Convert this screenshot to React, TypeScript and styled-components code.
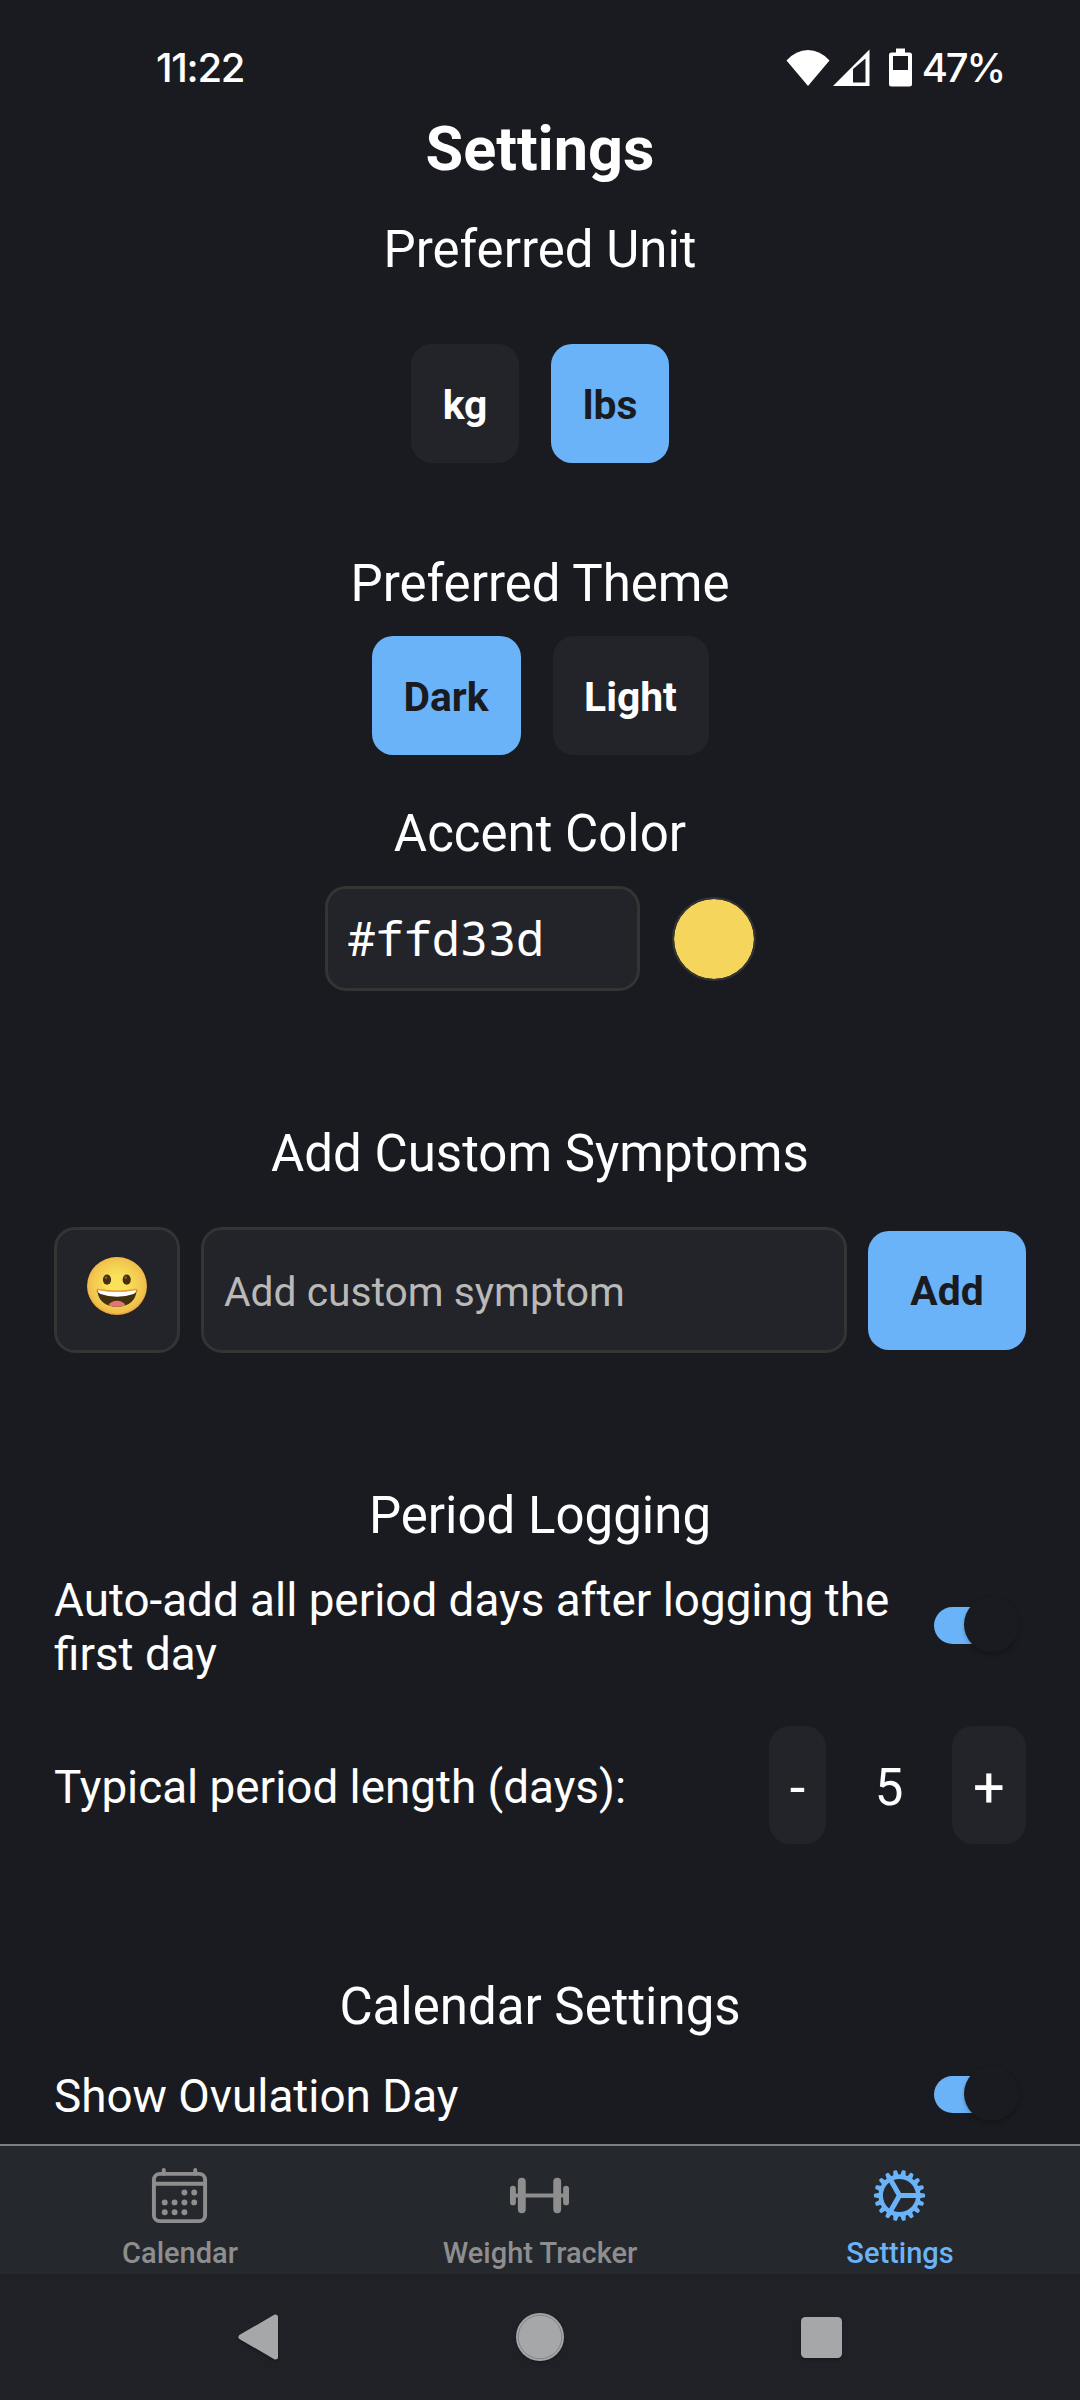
import React from "react";
import styled, { createGlobalStyle } from "styled-components";
import { IoBarbellOutline, IoCalendarOutline, IoCogSharp } from "react-icons/io5";

const color = {
  background: "#1a1b20",
  card: "#232429",
  border: "#333433",
  accent: "#6bb3f8",
  text: "#ffffff",
  onAccent: "#1a1b20",
  placeholder: "#b9b9b8",
  swatch: "#f6d55c",
  tabBar: "#25292e",
  tabInactive: "#8e8e8f",
  systemNav: "#202126",
  systemIcon: "#a6a7a9",
};

const GlobalStyle = createGlobalStyle`
  * { box-sizing: border-box; }
  body {
    margin: 0;
    background: ${color.background};
    font-family: Roboto, "Noto Sans", sans-serif;
    color: ${color.text};
  }
  button, input { font: inherit; color: inherit; border: 0; padding: 0; outline: 0; }
`;

const Screen = styled.div`
  display: flex;
  flex-direction: column;
  width: 1080px;
  height: 2400px;
  overflow: hidden;
  background: ${color.background};
`;

const StatusBar = styled.header`
  display: flex;
  flex: none;
  align-items: center;
  justify-content: space-between;
  height: 113px;
  padding: 22px 76px 0 156px;
  font-family: Inter, Roboto, sans-serif;
  font-size: 40px;
  font-weight: 500;
  line-height: 48px;
`;

const Clock = styled.span`
  letter-spacing: -1.3px;
`;

const StatusIcons = styled.div`
  display: flex;
  align-items: center;
`;

const Battery = styled.span`
  margin-left: 10px;
  letter-spacing: -2.2px;
`;

const Content = styled.main`
  flex: 1;
  min-height: 0;
  overflow: hidden;
  padding: 0 54px;
`;

const Title = styled.h1`
  margin: 0 0 35px;
  font-size: 61.2px;
  font-weight: 700;
  line-height: 72px;
  text-align: center;
`;

const Section = styled.section<{ $after: number }>`
  margin-bottom: ${(p) => p.$after}px;
`;

const Heading = styled.h2<{ $gap: number }>`
  margin: 0 0 ${(p) => p.$gap}px;
  font-size: 51px;
  font-weight: 400;
  line-height: 60px;
  text-align: center;
`;

const ChoiceRow = styled.div`
  display: flex;
  justify-content: center;
  gap: 32px;
`;

const Choice = styled.button<{ $active?: boolean; $width: number }>`
  width: ${(p) => p.$width}px;
  height: 119px;
  padding-top: 2px;
  border-radius: 21px;
  background: ${(p) => (p.$active ? color.accent : color.card)};
  color: ${(p) => (p.$active ? color.onAccent : color.text)};
  font-size: 40.8px;
  font-weight: 700;
  line-height: 48px;
`;

const ColorRow = styled.div`
  display: flex;
  align-items: center;
  justify-content: center;
  gap: 32px;
`;

const ColorInput = styled.input`
  width: 315px;
  height: 105px;
  padding: 0 20px 2px;
  border: 3px solid ${color.border};
  border-radius: 21px;
  background: ${color.card};
  font-family: "Noto Sans Mono", "DejaVu Sans Mono", monospace;
  font-size: 46.8px;
`;

const Swatch = styled.div`
  width: 84px;
  height: 84px;
  border: 2px solid ${color.border};
  border-radius: 50%;
  background: ${color.swatch};
  background-clip: padding-box;
`;

const SymptomRow = styled.div`
  display: flex;
  align-items: center;
  gap: 21px;
`;

const EmojiButton = styled.button`
  display: flex;
  align-items: center;
  justify-content: center;
  width: 126px;
  height: 126px;
  padding: 0 1px 8px 0;
  border: 3px solid ${color.border};
  border-radius: 21px;
  background: ${color.card};
`;

const SymptomInput = styled.input`
  flex: 1;
  min-width: 0;
  height: 126px;
  padding: 3px 20px 0;
  border: 3px solid ${color.border};
  border-radius: 21px;
  background: ${color.card};
  font-size: 40.8px;
  &::placeholder { color: ${color.placeholder}; opacity: 1; }
`;

const SettingRow = styled.div<{ $after?: number }>`
  display: flex;
  align-items: center;
  justify-content: space-between;
  margin-bottom: ${(p) => p.$after ?? 0}px;
`;

const SettingLabel = styled.p<{ $drop?: number }>`
  margin: 0;
  padding-top: ${(p) => p.$drop ?? 0}px;
  max-width: 860px;
  font-size: 45.8px;
  line-height: 54px;
`;

const Track = styled.div`
  display: flex;
  align-items: center;
  justify-content: flex-end;
  width: 79px;
  height: 37px;
  margin: 0 13px 5px 0;
  border-radius: 19px;
  background: ${color.accent};
`;

const Thumb = styled.div`
  flex: none;
  width: 55px;
  height: 55px;
  margin: 0 -6px 2px 0;
  border-radius: 50%;
  background: ${color.background};
  box-shadow: 0 4px 5px rgba(0, 0, 0, 0.15), 0 0 3px rgba(0, 0, 0, 0.1);
`;

const Stepper = styled.div`
  display: flex;
  align-items: center;
`;

const StepButton = styled.button<{ $width: number }>`
  width: ${(p) => p.$width}px;
  height: 118px;
  padding-top: 5px;
  border-radius: 21px;
  background: ${color.card};
  font-size: 56px;
  line-height: 66px;
`;

const StepValue = styled.span`
  width: 126px;
  padding-top: 5px;
  font-size: 51px;
  line-height: 60px;
  text-align: center;
`;

const TabBar = styled.nav`
  display: grid;
  flex: none;
  grid-template-columns: repeat(3, 1fr);
  height: 130px;
  border-top: 2px solid #7c7e81;
  background: ${color.tabBar};
`;

const Tab = styled.a<{ $active?: boolean }>`
  display: flex;
  flex-direction: column;
  align-items: center;
  gap: 9px;
  padding-top: 18px;
  color: ${(p) => (p.$active ? color.accent : color.tabInactive)};
  font-size: 29px;
  font-weight: 500;
  line-height: 34px;
  svg { margin-right: 2px; }
`;

const SystemNav = styled.footer`
  display: flex;
  flex: none;
  align-items: center;
  justify-content: center;
  gap: 237px;
  height: 126px;
  background: ${color.systemNav};
  svg { overflow: visible; filter: drop-shadow(0 2px 1px rgba(0, 0, 0, 0.22)); }
`;

const StatusGlyph = styled.svg<{ $before?: number }>`
  margin-left: ${(p) => p.$before ?? 0}px;
`;

const WifiIcon = () => (
  <StatusGlyph width="44" height="38" viewBox="0 0 44 38">
    <path d="M0.5 11.5Q10 1 22 1T43.5 11.5L22 37Z" fill="#fff" />
  </StatusGlyph>
);

const SignalIcon = () => (
  <StatusGlyph $before={3} width="37" height="38" viewBox="0 0 37 38">
    <path fillRule="evenodd" d="M0 37L36.5 0.5V37ZM20 20V33.500H32.500V9.500Z" fill="#fff" />
  </StatusGlyph>
);

const BatteryIcon = () => (
  <StatusGlyph $before={19} width="23" height="39" viewBox="0 0 23 39">
    <path
      fillRule="evenodd"
      d="M7 0.500H16V4.500H20.500Q23 4.500 23 7V36Q23 38.500 20.500 38.500H2.500Q0 38.500 0 36V7Q0 4.500 2.500 4.500H7ZM4 8V22H19V8Z"
      fill="#fff"
    />
  </StatusGlyph>
);

const GrinIcon = () => (
  <svg width="60" height="58" viewBox="0 0 60 58">
    <defs>
      <radialGradient id="face" cx="50%" cy="48%" r="52%">
        <stop offset="0.3" stopColor="#f9e25a" />
        <stop offset="0.75" stopColor="#f3ca50" />
        <stop offset="0.92" stopColor="#f0bd4b" />
        <stop offset="1" stopColor="#e79a3a" />
      </radialGradient>
    </defs>
    <ellipse cx="30" cy="29" rx="30" ry="29" fill="url(#face)" />
    <ellipse cx="20" cy="22.700" rx="4.100" ry="5.100" fill="#46300f" />
    <ellipse cx="39.700" cy="22.700" rx="4.100" ry="5.100" fill="#46300f" />
    <circle cx="19" cy="20.600" r="1.300" fill="#80602c" />
    <circle cx="38.700" cy="20.600" r="1.300" fill="#80602c" />
    <path d="M11 33.500Q30 37 49 33.500" fill="none" stroke="#e79a3a" strokeWidth="3.600" strokeLinecap="round" />
    <path d="M10.500 34Q30 38 49.500 34C49 43 42 49.800 30 49.800S11 43 10.500 34Z" fill="#43300f" />
    <path d="M10.800 34Q11 32.800 13 33.400Q30 36.800 47 33.400Q49 32.800 49.200 34Q49 36 46.500 36.900Q30 42.600 13.500 36.900Q11 36 10.800 34Z" fill="#fff" />
    <path d="M21.500 48.300Q24 43.700 30 43.700T38.500 48.300Q35 49.800 30 49.800T21.500 48.300Z" fill="#e0766f" />
  </svg>
);

const BackIcon = () => (
  <svg width="41" height="46" viewBox="0 0 41 46">
    <path d="M3 23L37.500 3V43Z" fill={color.systemIcon} stroke={color.systemIcon} strokeWidth="5" strokeLinejoin="round" />
  </svg>
);

const HomeIcon = () => (
  <svg width="48" height="48" viewBox="0 0 48 48">
    <circle cx="24" cy="24" r="24" fill={color.systemIcon} />
    <circle cx="24" cy="24" r="21.800" fill="none" stroke="#7e7f82" strokeWidth="0.9" />
  </svg>
);

const RecentsIcon = () => (
  <svg width="41" height="41" viewBox="0 0 41 41">
    <rect width="41" height="41" rx="4.500" fill={color.systemIcon} />
  </svg>
);

const Toggle = () => (
  <Track role="switch" aria-checked="true">
    <Thumb />
  </Track>
);

export default function App() {
  return (
    <Screen>
      <GlobalStyle />
      <StatusBar>
        <Clock>11:22</Clock>
        <StatusIcons>
          <WifiIcon />
          <SignalIcon />
          <BatteryIcon />
          <Battery>47%</Battery>
        </StatusIcons>
      </StatusBar>

      <Content>
        <Title>Settings</Title>

        <Section $after={91}>
          <Heading $gap={64}>Preferred Unit</Heading>
          <ChoiceRow>
            <Choice $width={108}>kg</Choice>
            <Choice $width={118} $active>lbs</Choice>
          </ChoiceRow>
        </Section>

        <Section $after={49}>
          <Heading $gap={22}>Preferred Theme</Heading>
          <ChoiceRow>
            <Choice $width={149} $active>Dark</Choice>
            <Choice $width={156}>Light</Choice>
          </ChoiceRow>
        </Section>

        <Section $after={133}>
          <Heading $gap={22}>Accent Color</Heading>
          <ColorRow>
            <ColorInput defaultValue="#ffd33d" spellCheck={false} />
            <Swatch />
          </ColorRow>
        </Section>

        <Section $after={133}>
          <Heading $gap={43}>Add Custom Symptoms</Heading>
          <SymptomRow>
            <EmojiButton aria-label="Choose emoji">
              <GrinIcon />
            </EmojiButton>
            <SymptomInput placeholder="Add custom symptom" />
            <Choice $width={158} $active>Add</Choice>
          </SymptomRow>
        </Section>

        <Section $after={133}>
          <Heading $gap={28}>Period Logging</Heading>
          <SettingRow $after={44}>
            <SettingLabel>Auto-add all period days after logging the first day</SettingLabel>
            <Toggle />
          </SettingRow>
          <SettingRow>
            <SettingLabel $drop={5}>Typical period length (days):</SettingLabel>
            <Stepper>
              <StepButton $width={57}>-</StepButton>
              <StepValue>5</StepValue>
              <StepButton $width={74}>+</StepButton>
            </Stepper>
          </SettingRow>
        </Section>

        <Section $after={0}>
          <Heading $gap={33}>Calendar Settings</Heading>
          <SettingRow>
            <SettingLabel>Show Ovulation Day</SettingLabel>
            <Toggle />
          </SettingRow>
        </Section>
      </Content>

      <TabBar>
        <Tab>
          <IoCalendarOutline size={63} />
          Calendar
        </Tab>
        <Tab>
          <IoBarbellOutline size={63} />
          Weight Tracker
        </Tab>
        <Tab $active>
          <IoCogSharp size={63} />
          Settings
        </Tab>
      </TabBar>

      <SystemNav>
        <BackIcon />
        <HomeIcon />
        <RecentsIcon />
      </SystemNav>
    </Screen>
  );
}
